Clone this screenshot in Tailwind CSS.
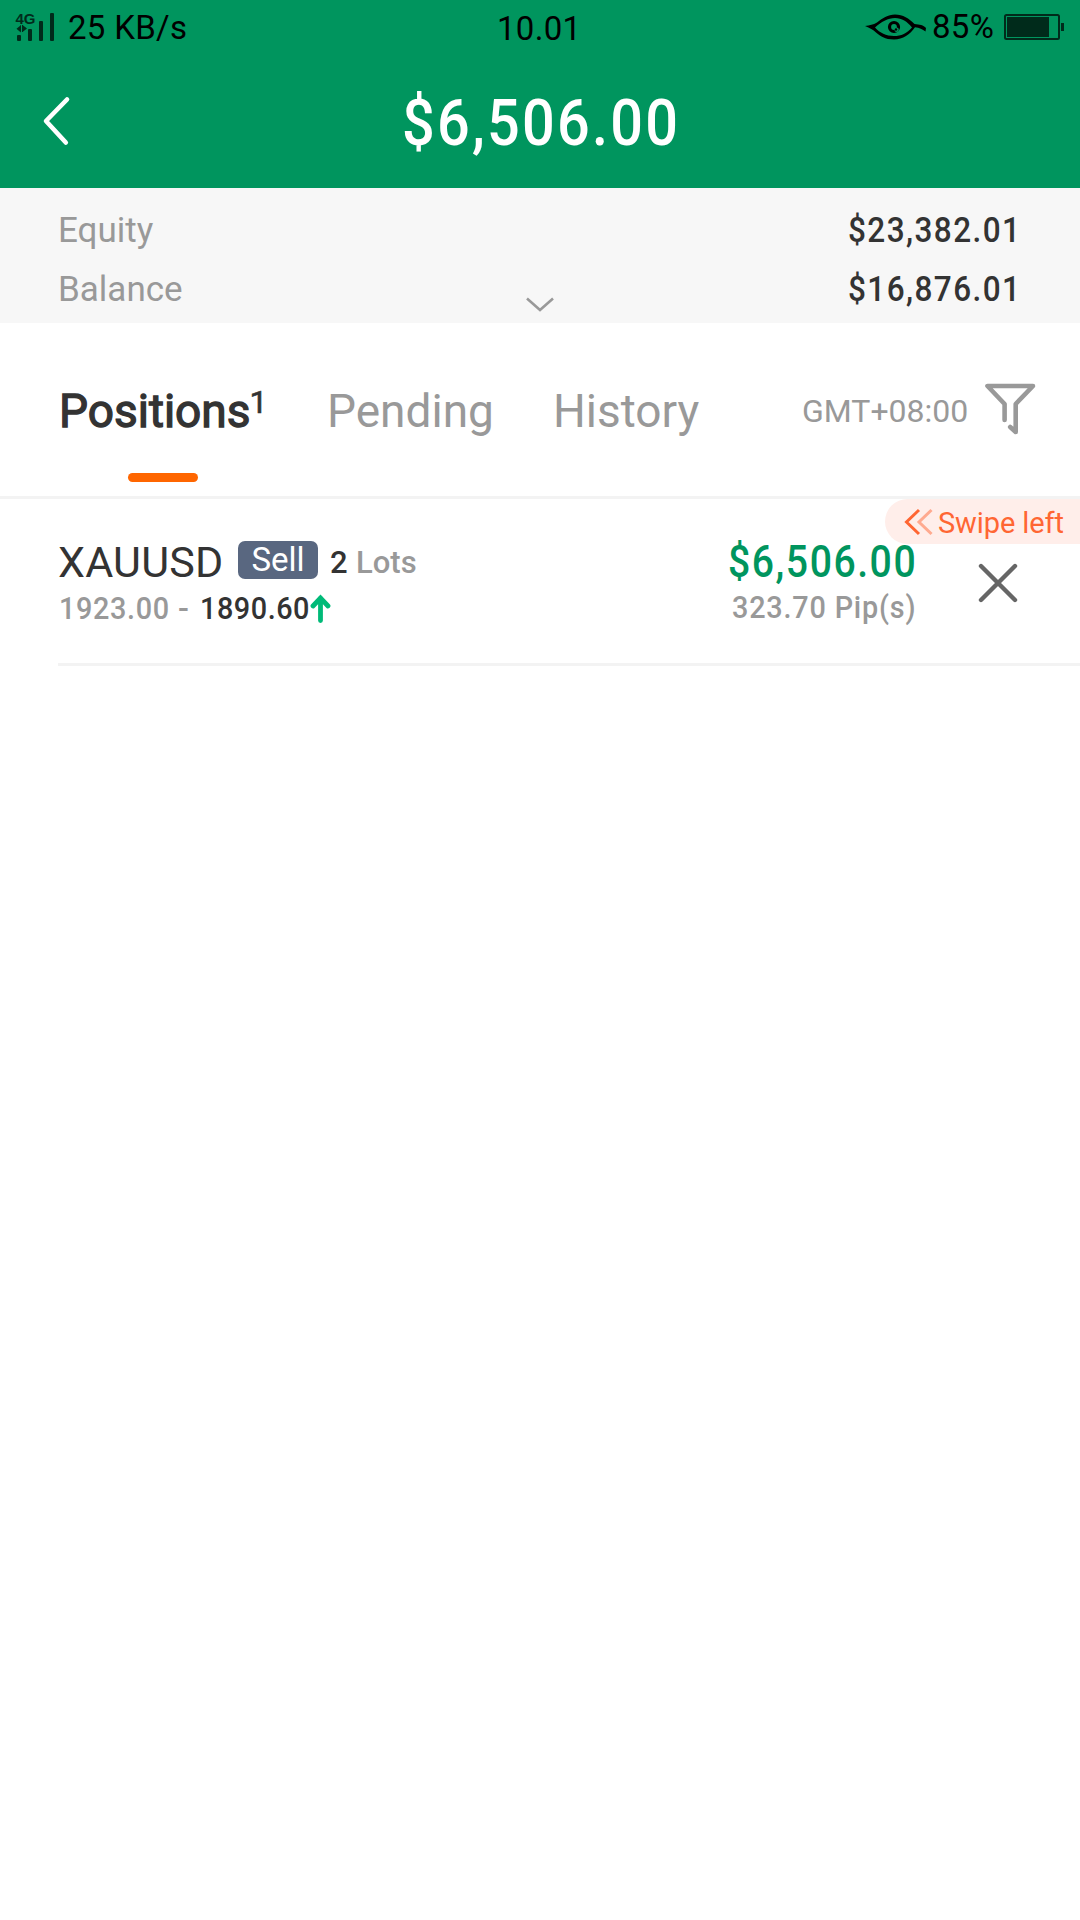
<!DOCTYPE html>
<html lang="en">
<head>
<meta charset="utf-8">
<title>Positions</title>
<script src="https://cdn.jsdelivr.net/npm/@tailwindcss/browser@4"></script>
</head>
<body class="h-[1920px] w-[1080px] overflow-hidden bg-white font-[Roboto,sans-serif] text-[#333333]">
<header class="h-[188px] bg-[#00955e]">
  <!-- status bar -->
  <div class="grid h-[55px] grid-cols-[497px_1fr_215px] whitespace-nowrap text-[33px] leading-[55px] text-black">
    <div class="flex items-start">
      <svg class="ml-[14px] mt-[10px] h-[34px] w-[42px] shrink-0" viewBox="14 10 42 34" fill="#002b1b">
        <text x="15.4" y="24" font-family="Liberation Sans, sans-serif" font-weight="700" font-size="15" textLength="20" lengthAdjust="spacingAndGlyphs">4G</text>
        <path d="M16.500 28.800l4.300-3.600v7.200zM27 28.500l-4.500-3.500v7z"/>
        <path d="M20.500 25.500v6M22.500 25v7" stroke="#002b1b" stroke-width="1"/>
        <rect x="17" y="35" width="4" height="6" rx="1"/><rect x="28" y="29" width="4" height="12" rx="1"/><rect x="39" y="21" width="4" height="20" rx="1"/><rect x="50" y="13" width="4" height="28" rx="1"/>
      </svg>
      <span class="ml-[12px] tracking-[0.3px]">25 KB/s</span>
    </div>
    <span class="pt-px tracking-[0.3px]">10.01</span>
    <div class="flex items-start">
      <svg class="mt-[12px] h-[30px] w-[62px] shrink-0" viewBox="865 12 62 30">
        <path fill="#000" fill-rule="evenodd" d="M865 26c5-.7 8-1.300 12-3.500 5-4 11-8 18-8 8 0 14 4 19.500 9.500 5 .5 9 1 11.500 4l-.5 3.500c-3-2-6-3.800-10.500-4.200C910 34.500 903 39.500 894 39.500c-9 0-14-3.500-18-7-3-3-6-4.500-11-6.500zM875 27.500c5 5.500 11 8.500 19 8.500 7 0 13-2.500 18-8.500-5-6-10-9.500-17-9.500s-14 4-20 9.500z"/>
        <circle cx="894" cy="27" r="4.500" fill="none" stroke="#000" stroke-width="3.200"/><circle cx="896.600" cy="29.800" r="2.200" fill="#00955e"/><circle cx="896" cy="29.500" r="1.200" fill="#000"/>
      </svg>
      <span class="ml-[5px] -mt-px w-[61.500px] tracking-[0.3px]">85%</span>
      <svg class="ml-[9.500px] mt-[13px] h-[28px] w-[62px] shrink-0" viewBox="1003 13 62 28">
        <rect x="1005" y="15" width="54" height="24" rx="1.500" fill="none" stroke="#002b1b" stroke-width="2"/><path d="M1007 17h42v20h-42zM1061 23h3v8h-3z" fill="#002b1b"/>
      </svg>
    </div>
  </div>
  <div class="grid h-[133px] grid-cols-[402px_1fr] items-start">
    <svg class="ml-[40px] mt-[38px] h-[56px] w-[34px]" viewBox="40 93 34 56" fill="none" stroke="#fff" stroke-width="4.600" stroke-linecap="round" stroke-linejoin="round"><path d="M67 99.500L46 121l19.800 21.500"/></svg>
    <h1 class="origin-left scale-x-90 pt-[34px] text-[64px] font-medium leading-[70px] tracking-[2.5px] text-white">$6,506.00</h1>
  </div>
</header>

<section class="grid h-[135px] grid-cols-[468px_28px_468px] bg-[#f7f7f7] px-[58px] text-[35px] leading-[59px]">
  <div class="pt-[13px] text-[#999999]"><p>Equity</p><p>Balance</p></div>
  <svg class="mt-[108px] h-[16px] w-[28px]" viewBox="0 0 28 16" fill="none" stroke="#999" stroke-width="2.600"><path d="M1 2.500L14 14 27 2.500"/></svg>
  <div class="ml-[294px] origin-left scale-x-90 whitespace-nowrap pt-[13px] font-medium tracking-[1.6px]"><p>$23,382.01</p><p>$16,876.01</p></div>
</section>

<nav class="flex h-[176px] items-start border-b-[3px] border-[#f3f3f3] whitespace-nowrap text-[46px] leading-[60px] text-[#999999]">
  <div class="ml-[59px] mt-[58px] w-[268px]">
    <div class="flex h-[60px] text-[#333333]"><span class="w-[190.500px] [-webkit-text-stroke:1.3px_#333333]">Positions</span><span class="-mt-[9px] text-[32px] [-webkit-text-stroke:0.6px_#333333]">1</span></div>
    <div class="ml-[69px] mt-[32px] h-[9px] w-[70px] rounded-full bg-[#ff6600]"></div>
  </div>
  <span class="mt-[58px] w-[226px]">Pending</span>
  <span class="mt-[58px] w-[249px]">History</span>
  <span class="mt-[58px] w-[181px] text-[32px]">GMT+08:00</span>
  <svg class="mt-[57px] h-[58px] w-[56px]" viewBox="983 380 56 58" fill="none" stroke="#999" stroke-width="4.600" stroke-linecap="round" stroke-linejoin="round"><path d="M1004.600 420v-16L987.500 386h45.500l-17.300 18v28l-5.500-5"/></svg>
</nav>

<main>
  <article class="relative ml-[58px] flex h-[167px] items-start border-b-[3px] border-[#f3f3f3] whitespace-nowrap pt-[38px]">
    <div class="w-[670px]">
      <div class="flex h-[48px] items-start">
        <span class="w-[180px] text-[43px] leading-[50px] tracking-[0.2px]">XAUUSD</span>
        <span class="mt-[4px] h-[38px] w-[80px] rounded-[7px] bg-[#596780] text-center text-[33px] leading-[38px] text-white">Sell</span>
        <span class="ml-[12px] mt-[3px] w-[26px] text-[31px] font-medium leading-[46px]">2</span>
        <span class="mt-[3px] text-[31px] font-medium leading-[46px] text-[#999999]">Lots</span>
      </div>
      <div class="flex h-[46px] items-start text-[32px] font-medium leading-[47px]">
        <span class="ml-px w-[119px] origin-left scale-x-90 tracking-[0.7px] text-[#999999]">1923.00</span><span class="w-[22px] text-[#999999]">-</span><span class="w-[110px] origin-left scale-x-90 tracking-[0.6px]">1890.60</span>
        <svg class="mt-[8px] h-[32px] w-[22px]" viewBox="310 592 22 32" fill="none" stroke="#00ba78" stroke-width="4.800" stroke-linecap="round" stroke-linejoin="miter"><path d="M313 605l7.500-8 7.500 8M320.500 597v22.500"/></svg>
      </div>
    </div>
    <div class="w-[186px] font-medium">
      <p class="h-[48px] origin-left scale-x-90 text-[43.500px] leading-[52px] tracking-[1.700px] text-[#00955e]">$6,506.00</p>
      <p class="ml-[4px] origin-left scale-x-90 text-[32px] leading-[45px] tracking-[0.9px] text-[#999999]">323.70 Pip(s)</p>
    </div>
    <svg class="ml-[62px] mt-[24px] h-[44px] w-[44px]" viewBox="976 561 44 44" fill="none" stroke="#666" stroke-width="4.400" stroke-linecap="round"><path d="M981 566l34 34M1015 566l-34 34"/></svg>
    <div class="absolute right-0 top-0 flex h-[45px] w-[195px] items-center rounded-l-full bg-[#ffeeea] text-[29px] tracking-[-0.1px] text-[#ff6633]">
      <svg class="ml-[18px] h-[28px] w-[32px]" viewBox="903 507 32 28" fill="none" stroke="#ff6633" stroke-width="3"><path d="M919 509l-12.500 12 12.500 12"/><path opacity=".5" d="M931.500 509l-12.500 12 12.500 12"/></svg>
      <span class="ml-[3px] pt-[3px] leading-[40px]">Swipe left</span>
    </div>
  </article>
</main>
</body>
</html>
